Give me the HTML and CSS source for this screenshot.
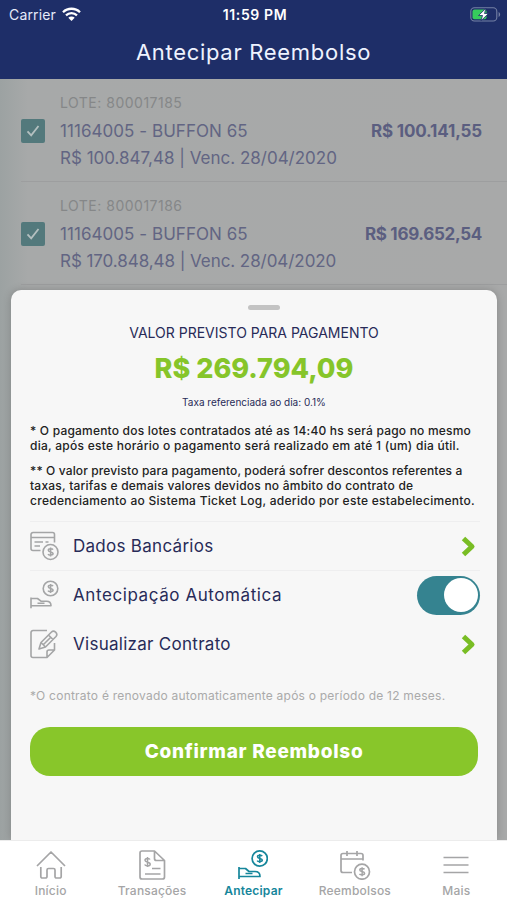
FILE: index.html
```html
<!DOCTYPE html>
<html lang="pt-BR">
<head>
<meta charset="utf-8">
<meta name="viewport" content="width=device-width, initial-scale=1">
<title>Antecipar Reembolso</title>
<link rel="stylesheet" href="styles.css">
</head>
<body>
<div class="app">
  <header class="header">
    <div class="status">
      <div class="carrier"><span>Carrier</span>
        <svg width="19" height="14" viewBox="0 0 19 14" fill="none" stroke="#fff" stroke-width="2.3"><path d="M1 5.200a12.200 12.200 0 0 1 17 0M4 8.400a8 8 0 0 1 11 0"/><path d="M6.300 10.800a4.600 4.600 0 0 1 6.400 0L9.500 14z" fill="#fff" stroke="none"/></svg>
      </div>
      <div class="time">11:59 PM</div>
      <div class="battery">
        <svg width="31" height="15" viewBox="0 0 31 15"><rect x=".8" y=".8" width="26" height="13.200" rx="3.600" fill="none" stroke="#7581a5" stroke-width="1.100"/><path d="M28.600 5v5c2-.8 2-4.200 0-5z" fill="#7581a5"/><rect x="2.500" y="2.500" width="14" height="9.800" rx="2" fill="#36cc5c"/><path d="M16 1.200 8.500 8.500h4l-1.500 5.300 7.500-7.300h-4z" fill="#fff" stroke="#1e2e68" stroke-width=".8"/></svg>
      </div>
    </div>
    <h1 class="title">Antecipar Reembolso</h1>
  </header>

  <main class="main">
    <section class="lots">
      <article class="lot">
        <span class="check"><svg width="14" height="14" viewBox="0 0 14 14" fill="none" stroke="#b4c0c0" stroke-width="1.800"><path d="m1.500 7.300 3.700 4L12.500 2"/></svg></span>
        <div class="lot-body">
          <div class="lot-id">LOTE: 800017185</div>
          <div class="lot-line"><span class="lot-name">11164005 - BUFFON 65</span><strong class="lot-value v1">R$ 100.141,55</strong></div>
          <div class="lot-due">R$ 100.847,48 | Venc. 28/04/2020</div>
        </div>
      </article>
      <article class="lot">
        <span class="check"><svg width="14" height="14" viewBox="0 0 14 14" fill="none" stroke="#b4c0c0" stroke-width="1.800"><path d="m1.500 7.300 3.700 4L12.500 2"/></svg></span>
        <div class="lot-body">
          <div class="lot-id">LOTE: 800017186</div>
          <div class="lot-line"><span class="lot-name">11164005 - BUFFON 65</span><strong class="lot-value v2">R$ 169.652,54</strong></div>
          <div class="lot-due due2">R$ 170.848,48 | Venc. 28/04/2020</div>
        </div>
      </article>
    </section>

    <section class="sheet">
      <div class="handle"></div>
      <div class="label"><span>VALOR PREVISTO PARA PAGAMENTO</span></div>
      <div class="amount"><span>R$ 269.794,09</span></div>
      <div class="rate"><span>Taxa referenciada ao dia: 0.1%</span></div>
      <p class="note"><span class="n1">* O pagamento dos lotes contratados até as 14:40 hs será pago no mesmo</span><br><span class="n2">dia, após este horário o pagamento será realizado em até 1 (um) dia útil.</span></p>
      <p class="note"><span class="n3">** O valor previsto para pagamento, poderá sofrer descontos referentes a</span><br><span class="n4">taxas, tarifas e demais valores devidos no âmbito do contrato de</span><br><span class="n5">credenciamento ao Sistema Ticket Log, aderido por este estabelecimento.</span></p>
      <div class="options">
        <div class="option">
          <svg class="opt-icon" width="30" height="30" viewBox="0 0 30 30"><path d="M24.500 11.500V3.500a2 2 0 0 0-2-2H3a2 2 0 0 0-2 2v14a2 2 0 0 0 2 2h7.500M1 6.500h23.500M4.500 11h8.500M15.500 11h3M4.500 15h5.500"/><circle cx="20.500" cy="21" r="7.500"/><path class="dollar" d="M23 18.700c-.6-1.100-4.700-1.400-4.700.6 0 2.200 4.800 1 4.800 3.300 0 2-4.400 1.900-5.100.5M20.600 16.500v9"/></svg>
          <span class="t1">Dados Bancários</span>
          <svg class="chevron" width="16" height="23" viewBox="0 0 16 23"><path d="m3.500 3.500 8.500 8-8.500 8"/></svg>
        </div>
        <div class="option">
          <svg class="opt-icon" width="30" height="30" viewBox="0 0 30 30"><circle cx="20.500" cy="8.500" r="7.300"/><path class="dollar" d="M23 6.200c-.6-1.100-4.700-1.400-4.700.6 0 2.200 4.800 1 4.800 3.300 0 2-4.400 1.900-5.100.5M20.600 4v9"/><path d="M1 17.500v10.800M1 18.500h6.500l3.500 2.700h5.500c3 0 4.500 1.300 4.500 4.500H1M7.500 23.300h7"/></svg>
          <span class="t2">Antecipação Automática</span>
          <span class="toggle"><i></i></span>
        </div>
        <div class="option">
          <svg class="opt-icon" width="30" height="30" viewBox="0 0 30 30"><path d="M17 1.500H3a2 2 0 0 0-2 2v23a2 2 0 0 0 2 2h14l7.500-7.500v-7M24.500 21H19a2 2 0 0 0-2 2v5.500M9 20l2-6.500L21.500 3c2.500-2.500 7 1.500 4.500 4.500L15.500 18zM18.500 6l4.500 4.500M11 13.500l4.500 4.500M13.500 15.500l7-7"/></svg>
          <span class="t3">Visualizar Contrato</span>
          <svg class="chevron" width="16" height="23" viewBox="0 0 16 23"><path d="m3.500 3.500 8.500 8-8.500 8"/></svg>
        </div>
      </div>
      <p class="footnote">*O contrato é renovado automaticamente após o período de 12 meses.</p>
      <button class="confirm">Confirmar Reembolso</button>
    </section>
  </main>

  <nav class="tabs">
    <a class="tab"><svg width="30" height="30" viewBox="0 0 30 30"><path d="M1 16 15 2l14 14M4.800 17v9.500a1.500 1.500 0 0 0 1.500 1.500h3.200a1.500 1.500 0 0 0 1.500-1.500V20a1.500 1.500 0 0 1 1.500-1.500h5A1.500 1.500 0 0 1 19 20v6.500a1.500 1.500 0 0 0 1.500 1.500h3.200a1.500 1.500 0 0 0 1.500-1.500V17"/></svg><span>Início</span></a>
    <a class="tab"><svg width="30" height="30" viewBox="0 0 30 30"><path d="M17.500 1H5a2 2 0 0 0-2 2v24a2 2 0 0 0 2 2h20.500a2 2 0 0 0 2-2V10.500zM17.500 1v7.500a2 2 0 0 0 2 2h8M15 18.500h8.500M8 24h15.500"/><path class="dollar" d="M13 9.500c-.6-1.400-5-1.700-5 .7 0 2.600 5.200 1.300 5.200 4 0 2.300-4.800 2.200-5.500.4M10.500 7v10"/></svg><span>Transações</span></a>
    <a class="tab active"><svg width="30" height="30" viewBox="0 0 30 30"><circle cx="21.700" cy="8.500" r="7.600"/><path class="dollar" d="M24.200 6.200c-.6-1.100-4.700-1.400-4.700.6 0 2.200 4.800 1 4.800 3.300 0 2-4.400 1.900-5.100.5M21.800 4v9"/><path d="M1 17v12M1 18.500h6.500l3.500 3h6c3 0 5 1.300 5 5H1M7.500 23.500h7"/></svg><span>Antecipar</span></a>
    <a class="tab"><svg width="32" height="30" viewBox="0 0 32 30"><path d="M24 10.500V5.500a2 2 0 0 0-2-2H4a2 2 0 0 0-2 2v15a2 2 0 0 0 2 2h9M2 9h22M8 1v5M18 1v5"/><circle cx="23" cy="21.700" r="7.500"/><path class="dollar" d="M25.500 19.400c-.6-1.100-4.700-1.400-4.700.6 0 2.200 4.800 1 4.800 3.300 0 2-4.400 1.900-5.100.5M23.100 17.200v9"/></svg><span>Reembolsos</span></a>
    <a class="tab"><svg width="30" height="30" viewBox="0 0 30 30"><path d="M2.500 7.500h25M2.500 15h25M2.500 22.500h25"/></svg><span>Mais</span></a>
  </nav>
</div>
</body>
</html>
```
FILE: styles.css
```css
* { box-sizing: border-box; margin: 0; }
body { font-family: Inter, "Liberation Sans", sans-serif; color: #282b58; }
span, strong, h1, p, button { white-space: nowrap; }
svg { flex: none; display: block; }

.app { width: 507px; height: 900px; display: flex; flex-direction: column; overflow: hidden; }

.header { height: 79px; flex: none; background: #1e2e68; color: #fff; }
.status { height: 28px; display: grid; grid-template-columns: 1fr auto 1fr; align-items: center; padding: 0 6px 0 9px; }
.carrier { display: flex; align-items: center; gap: 6px; font-size: 14px; letter-spacing: .15px; color: #e6eafa; }
.time { font-size: 14px; font-weight: 600; letter-spacing: .6px; }
.battery { display: flex; justify-content: flex-end; }
.title { font-size: 22px; font-weight: 400; line-height: 48px; letter-spacing: .7px; text-align: center; color: #eef3ff; }

.main { flex: 1; position: relative; background: linear-gradient(90deg, #9ca2a2, #a7a9a9 28px, #a8a9a9); }
.lots { padding: 0 0 0 21px; }
.lot { height: 103px; display: flex; align-items: center; border-bottom: 1px solid #9d9e9f; }
.check { width: 24px; height: 24px; margin-top: 1px; border-radius: 2px; background: #53797c; display: grid; place-items: center; }
.lot-body { flex: 1; margin-left: 15px; padding-right: 25px; color: #626583; font-size: 17px; }
.lot-id { font-size: 14px; line-height: 28px; letter-spacing: .5px; color: #858788; }
.lot-line { display: flex; justify-content: space-between; line-height: 28px; }
.lot-name { letter-spacing: .05px; }
.lot-value { font-weight: 700; color: #5b5e80; }
.v1 { letter-spacing: -.15px; }
.v2 { letter-spacing: -.3px; }
.lot-due { line-height: 26px; }
.due2 { letter-spacing: -.06px; }

.sheet { position: absolute; left: 11px; top: 211px; width: 486px; height: 550px; padding: 15px 17px 0 19px; background: #f7f7f7; border-radius: 10px 10px 0 0; box-shadow: 0 0 8px rgba(0, 0, 0, .2); }
.handle { width: 32px; height: 5px; margin-left: 218px; border-radius: 3px; background: #c3c3c3; }
.label, .amount, .rate { width: 448px; text-align: center; }
.label { margin-top: 13px; font-size: 14px; line-height: 20px; }
.amount { margin-top: 10px; font-size: 27px; font-weight: 800; line-height: 32px; color: #86c52a; }
.rate { margin-top: 9px; font-size: 10px; line-height: 16px; }
.note { font-size: 12px; font-weight: 500; line-height: 15px; color: #222; }
.rate + .note { margin-top: 13px; }
.note + .note { margin-top: 10px; }
.n1 { letter-spacing: .2px; }
.n2 { letter-spacing: .26px; }
.n3 { letter-spacing: .13px; }
.n4 { letter-spacing: .22px; }
.n5 { letter-spacing: .28px; }
.options { margin-top: 13px; }
.option { height: 49px; display: flex; align-items: center; border-top: 1px solid #eeeeef; font-size: 17px; }
.option:last-child { border-top-color: transparent; }
.t1, .t3 { letter-spacing: .28px; }
.t2 { letter-spacing: .58px; }
.opt-icon { margin-right: 13px; fill: none; stroke: #a4a5a6; stroke-width: 1.6; stroke-linejoin: round; }
.chevron { margin-left: auto; margin-right: 4px; fill: none; stroke: #79bd24; stroke-width: 5; stroke-linejoin: round; }
.toggle { width: 63px; height: 39px; margin-left: auto; padding: 2px; border-radius: 20px; background: #358390; display: flex; justify-content: flex-end; }
.toggle i { width: 34px; height: 34px; border-radius: 50%; background: #fff; }
.footnote { margin-top: 18px; font-size: 12px; line-height: 20px; letter-spacing: .23px; color: #aaa; }
.confirm { display: block; width: 448px; height: 49px; margin-top: 21px; padding: 0; border: 0; border-radius: 20px; background: #88c62a; color: #fff; font-family: inherit; font-size: 19px; font-weight: 800; letter-spacing: .72px; }

.tabs { position: relative; height: 60px; flex: none; display: grid; grid-template-columns: repeat(5, 1fr); background: #fff; border-top: 1px solid #ececec; }
.tab { display: flex; flex-direction: column; align-items: center; padding-top: 9px; font-size: 12px; font-weight: 500; line-height: 20px; letter-spacing: .2px; color: #a5a5a6; }
.tab svg { margin-bottom: 1px; fill: none; stroke: currentColor; stroke-width: 1.7; stroke-linejoin: round; }
.tab.active { color: #16869b; font-weight: 600; }
.dollar { stroke-width: 1.5; }
```
